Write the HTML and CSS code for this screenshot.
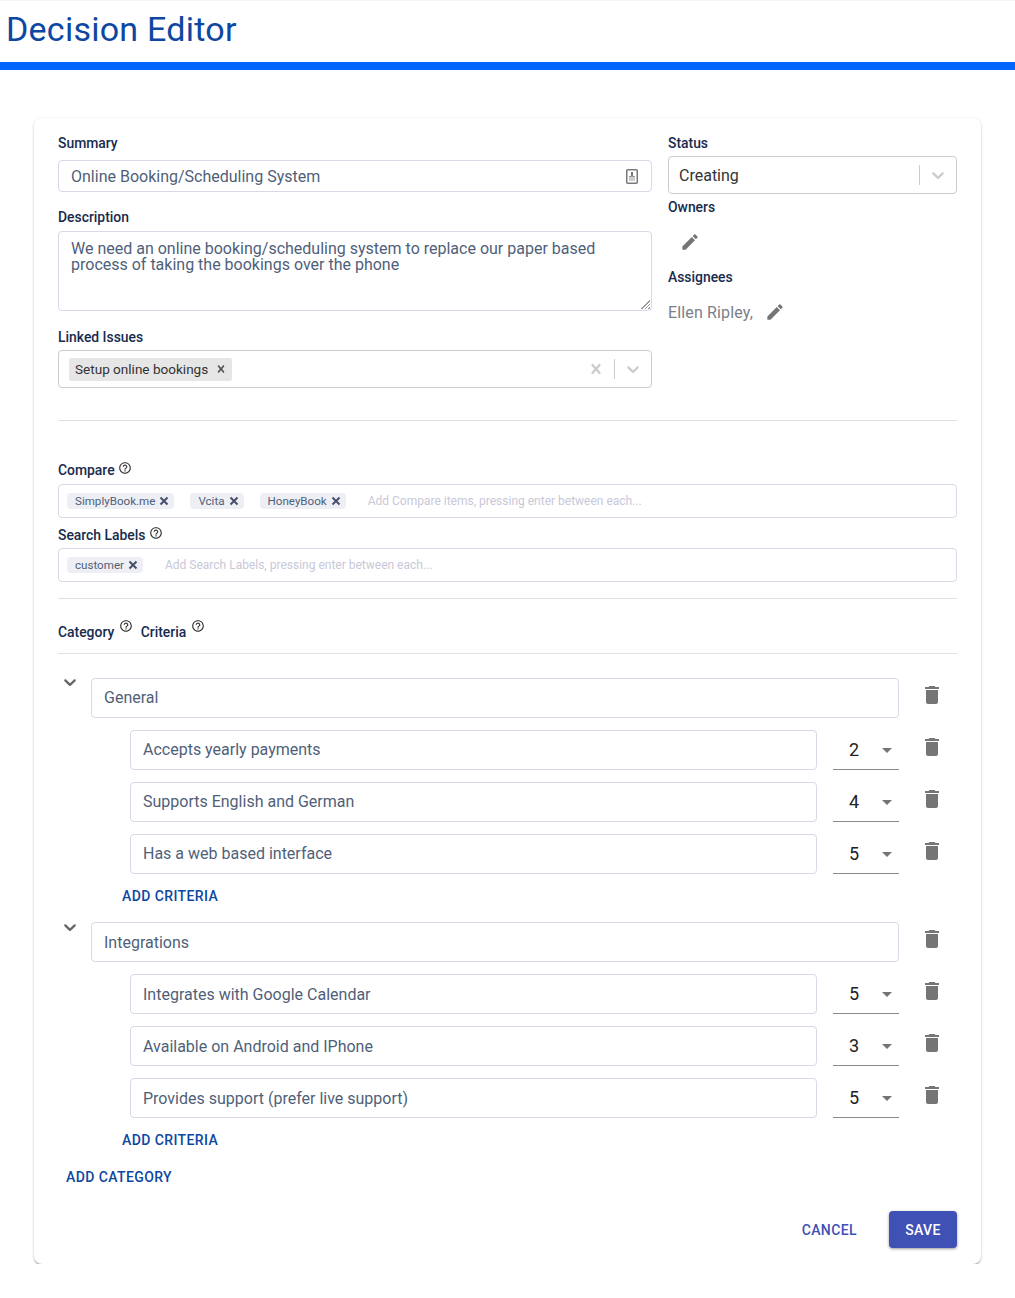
FILE: index.html
```html
<!DOCTYPE html>
<html lang="en">
<head>
  <meta charset="UTF-8" />
  <meta name="viewport" content="width=device-width, initial-scale=1.0" />
  <title>Decision Editor</title>
  <link rel="stylesheet" href="styles.css">
</head>
<body>
  <svg class="sprite" aria-hidden="true">
    <symbol id="i-pencil" viewBox="0 0 24 24"><path d="M3 17.25V21h3.75L17.81 9.94l-3.75-3.75L3 17.25zM20.71 7.04c.39-.39.39-1.02 0-1.41l-2.34-2.34c-.39-.39-1.02-.39-1.41 0l-1.83 1.83 3.75 3.75 1.83-1.83z"/></symbol>
    <symbol id="i-trash" viewBox="0 0 24 24"><path d="M6 19c0 1.1.9 2 2 2h8c1.1 0 2-.9 2-2V7H6v12zM19 4h-3.5l-1-1h-5l-1 1H5v2h14V4z"/></symbol>
    <symbol id="i-help" viewBox="0 0 24 24"><path d="M11 18h2v-2h-2v2zm1-16C6.48 2 2 6.48 2 12s4.48 10 10 10 10-4.48 10-10S17.52 2 12 2zm0 18c-4.41 0-8-3.59-8-8s3.59-8 8-8 8 3.59 8 8-3.59 8-8 8zm0-14c-2.21 0-4 1.79-4 4h2c0-1.1.9-2 2-2s2 .9 2 2c0 2-3 1.75-3 5h2c0-2.25 3-2.5 3-5 0-2.21-1.79-4-4-4z"/></symbol>
    <symbol id="i-chevron" viewBox="0 0 20 20"><path d="M4.516 7.548c0.436-0.446 1.043-0.481 1.576 0l3.908 3.747 3.908-3.747c0.533-0.481 1.141-0.446 1.574 0 0.436 0.445 0.408 1.197 0 1.615-0.406 0.418-4.695 4.502-4.695 4.502-0.217 0.223-0.502 0.335-0.787 0.335s-0.57-0.112-0.789-0.335c0 0-4.287-4.084-4.695-4.502s-0.436-1.17 0-1.615z"/></symbol>
    <symbol id="i-cross" viewBox="0 0 20 20"><path d="M14.348 14.849c-0.469 0.469-1.229 0.469-1.697 0l-2.651-3.030-2.651 3.029c-0.469 0.469-1.229 0.469-1.697 0-0.469-0.469-0.469-1.229 0-1.697l2.758-3.15-2.759-3.152c-0.469-0.469-0.469-1.228 0-1.697s1.228-0.469 1.697 0l2.652 3.031 2.651-3.031c0.469-0.469 1.228-0.469 1.697 0s0.469 1.229 0 1.697l-2.758 3.152 2.758 3.15c0.469 0.469 0.469 1.229 0 1.698z"/></symbol>
    <symbol id="i-close" viewBox="0 0 12 12"><path d="M2.500 2.500l7 7M9.500 2.500l-7 7" fill="none" stroke="currentColor" stroke-width="2"/></symbol>
    <symbol id="i-caret" viewBox="0 0 24 24"><path d="M7 10l5 5 5-5z"/></symbol>
    <symbol id="i-pass" viewBox="0 0 12 15">
      <rect x="0.750" y="0.750" width="10.500" height="13.500" rx="1" fill="#fff" stroke="#7a7a7a" stroke-width="1.500"/>
      <rect x="5" y="3" width="2" height="4" fill="#777"/>
      <rect x="3" y="7" width="6" height="1.500" fill="#999"/>
      <rect x="3" y="9" width="6" height="3" fill="#ccc"/>
    </symbol>
  </svg>

  <header class="page-header">
    <h1>Decision Editor</h1>
  </header>

  <main class="card">
    <section class="top">
      <div class="top-left">
        <div class="label">Summary</div>
        <div class="field summary">
          <span>Online Booking/Scheduling System</span>
          <svg class="pass-icon"><use href="#i-pass"/></svg>
        </div>

        <div class="label description-label">Description</div>
        <textarea class="description">We need an online booking/scheduling system to replace our paper based process of taking the bookings over the phone</textarea>

        <div class="label linked-label">Linked Issues</div>
        <div class="select">
          <div class="select-value">
            <span class="issue-tag">Setup online bookings <svg><use href="#i-cross"/></svg></span>
          </div>
          <svg class="select-clear"><use href="#i-cross"/></svg>
          <span class="select-sep"></span>
          <svg class="select-arrow"><use href="#i-chevron"/></svg>
        </div>
      </div>

      <div class="top-right">
        <div class="label status-label">Status</div>
        <div class="select">
          <div class="select-value status-value">Creating</div>
          <span class="select-sep"></span>
          <svg class="select-arrow"><use href="#i-chevron"/></svg>
        </div>
        <div class="label owners-label">Owners</div>
        <div class="people owners"><svg class="pencil"><use href="#i-pencil"/></svg></div>
        <div class="label">Assignees</div>
        <div class="people assignees">Ellen Ripley, <svg class="pencil"><use href="#i-pencil"/></svg></div>
      </div>
    </section>

    <hr class="rule first-rule">

    <div class="label compare-label">Compare <svg class="help"><use href="#i-help"/></svg></div>
    <div class="tags-box">
      <span class="tag">SimplyBook.me <svg><use href="#i-close"/></svg></span>
      <span class="tag">Vcita <svg><use href="#i-close"/></svg></span>
      <span class="tag">HoneyBook <svg><use href="#i-close"/></svg></span>
      <span class="tags-hint">Add Compare items, pressing enter between each...</span>
    </div>

    <div class="label search-label">Search Labels <svg class="help"><use href="#i-help"/></svg></div>
    <div class="tags-box">
      <span class="tag">customer <svg><use href="#i-close"/></svg></span>
      <span class="tags-hint">Add Search Labels, pressing enter between each...</span>
    </div>

    <hr class="rule second-rule">

    <div class="heading-row">
      <div class="label">Category <svg class="help raised"><use href="#i-help"/></svg></div>
      <div class="label">Criteria <svg class="help raised"><use href="#i-help"/></svg></div>
    </div>

    <hr class="rule third-rule">

    <div class="category">
      <div class="row">
        <svg class="toggle"><use href="#i-chevron"/></svg>
        <div class="field tall">General</div>
        <svg class="trash"><use href="#i-trash"/></svg>
      </div>
      <div class="row criterion">
        <div class="field tall">Accepts yearly payments</div>
        <div class="weight">2 <svg><use href="#i-caret"/></svg></div>
        <svg class="trash"><use href="#i-trash"/></svg>
      </div>
      <div class="row criterion">
        <div class="field tall">Supports English and German</div>
        <div class="weight">4 <svg><use href="#i-caret"/></svg></div>
        <svg class="trash"><use href="#i-trash"/></svg>
      </div>
      <div class="row criterion">
        <div class="field tall">Has a web based interface</div>
        <div class="weight">5 <svg><use href="#i-caret"/></svg></div>
        <svg class="trash"><use href="#i-trash"/></svg>
      </div>
      <button class="text-btn add-criteria">Add Criteria</button>
    </div>

    <div class="category">
      <div class="row">
        <svg class="toggle"><use href="#i-chevron"/></svg>
        <div class="field tall">Integrations</div>
        <svg class="trash"><use href="#i-trash"/></svg>
      </div>
      <div class="row criterion">
        <div class="field tall">Integrates with Google Calendar</div>
        <div class="weight">5 <svg><use href="#i-caret"/></svg></div>
        <svg class="trash"><use href="#i-trash"/></svg>
      </div>
      <div class="row criterion">
        <div class="field tall">Available on Android and IPhone</div>
        <div class="weight">3 <svg><use href="#i-caret"/></svg></div>
        <svg class="trash"><use href="#i-trash"/></svg>
      </div>
      <div class="row criterion">
        <div class="field tall">Provides support (prefer live support)</div>
        <div class="weight">5 <svg><use href="#i-caret"/></svg></div>
        <svg class="trash"><use href="#i-trash"/></svg>
      </div>
      <button class="text-btn add-criteria">Add Criteria</button>
    </div>

    <button class="text-btn add-category">Add Category</button>

    <div class="actions">
      <button class="text-btn cancel">Cancel</button>
      <button class="save">Save</button>
    </div>
  </main>
</body>
</html>
```

FILE: styles.css
```css
html, body {
  margin: 0;
  background: #fff;
  font-family: Roboto, sans-serif;
}
.sprite {
  display: none;
}
.page-header {
  height: 61px;
  border-top: 1px solid #f5f5f5;
  border-bottom: 8px solid #0066ff;
}
h1 {
  margin: 0;
  padding-left: 6px;
  font-size: 34px;
  font-weight: 400;
  letter-spacing: 0.25px;
  line-height: 56px;
  color: #0d47a1;
}
.card {
  box-sizing: border-box;
  width: 947px;
  height: 1146px;
  margin: 48px 0 0 34px;
  padding: 15px 24px 16px;
  border-radius: 8px;
  background: #fff;
  box-shadow: 0 2px 2px -1px rgba(0, 0, 0, 0.35), 0 1px 3px 0 rgba(0, 0, 0, 0.2);
}
.top {
  display: flex;
  gap: 16px;
}
.top-left {
  width: 594px;
}
.top-right {
  flex: 1;
}
.label {
  font-size: 13.9px;
  font-weight: 500;
  line-height: 20px;
  color: #172b4d;
}
.description-label {
  margin-top: 15px;
  margin-bottom: 4px;
}
.linked-label {
  margin-top: 16px;
  margin-bottom: 3px;
}
.status-label {
  margin-bottom: 3px;
}
.owners-label {
  margin-top: 3px;
}
.field {
  box-sizing: border-box;
  display: flex;
  align-items: center;
  border: 1px solid #d8d8e6;
  border-radius: 4px;
  padding: 0 12px;
  font-size: 16px;
  color: #505f79;
}
.summary {
  justify-content: space-between;
  height: 32px;
  margin-top: 7px;
}
.pass-icon {
  width: 12px;
  height: 15px;
  margin-right: 1px;
}
.description {
  display: block;
  box-sizing: border-box;
  width: 100%;
  height: 80px;
  margin: 0;
  padding: 9px 12px;
  border: 1px solid #d8d8e6;
  border-radius: 4px;
  outline: none;
  resize: none;
  background:
    linear-gradient(135deg, #fff 50%, transparent 50%) right 1px bottom 1px / 11px 11px no-repeat,
    repeating-linear-gradient(135deg, transparent 0 1.5px, #999 1.5px 2.5px) right 1px bottom 1px / 11px 11px no-repeat;
  font-family: inherit;
  font-size: 16px;
  line-height: 16px;
  color: #505f79;
}
.select {
  box-sizing: border-box;
  display: flex;
  align-items: center;
  height: 38px;
  padding-right: 8px;
  border: 1px solid #ccc;
  border-radius: 4px;
}
.select-value {
  flex: 1;
  display: flex;
  padding-left: 10px;
}
.status-value {
  font-size: 16px;
  color: #333;
}
.issue-tag {
  display: flex;
  align-items: center;
  height: 23px;
  padding: 0 4px 0 6px;
  border-radius: 2px;
  background: #e6e6e6;
  font-size: 13.55px;
  color: #333;
}
.issue-tag svg {
  width: 14px;
  height: 14px;
  margin-left: 6px;
  fill: #555;
}
.select-clear {
  width: 20px;
  height: 20px;
  margin-right: 8px;
  fill: #ccc;
}
.select-sep {
  width: 1px;
  height: 20px;
  background: #ccc;
}
.select-arrow {
  width: 20px;
  height: 20px;
  margin-left: 8px;
  fill: #ccc;
}
.people {
  display: flex;
  align-items: center;
  height: 50px;
  font-size: 16px;
  letter-spacing: 0.15px;
  color: #7a7f88;
}
.owners {
  padding-left: 10px;
}
.assignees {
  gap: 10px;
}
.pencil {
  width: 24px;
  height: 24px;
  fill: #757575;
  transform: scale(0.85);
}
.rule {
  margin: 0;
  border: none;
  border-top: 1px solid #e0e0e0;
}
.first-rule {
  margin-top: 32px;
}
.compare-label {
  margin-top: 39px;
  margin-bottom: 4px;
}
.search-label {
  margin-top: 7px;
  margin-bottom: 3px;
}
.help {
  width: 14px;
  height: 14px;
  fill: #333;
}
.help.raised {
  margin-left: 1px;
  vertical-align: 4px;
}
.tags-box {
  box-sizing: border-box;
  display: flex;
  align-items: center;
  gap: 16px;
  height: 34px;
  padding: 0 8px;
  border: 1px solid #d8d8e6;
  border-radius: 4px;
}
.tag {
  display: flex;
  align-items: center;
  height: 16px;
  padding: 0 4px 0 8px;
  border-radius: 4px;
  background: #eeeef5;
  font-size: 11.6px;
  color: #505f79;
}
.tag svg {
  width: 12px;
  height: 12px;
  margin-left: 3px;
  color: #46506a;
}
.tags-hint {
  margin-left: 6px;
  font-size: 12px;
  color: #c8c8d8;
}
.second-rule {
  margin-top: 16px;
}
.heading-row {
  display: flex;
  gap: 8px;
  margin-top: 20px;
}
.third-rule {
  margin-top: 11px;
  margin-bottom: 24px;
}
.row {
  display: flex;
  align-items: center;
  height: 40px;
  margin-bottom: 12px;
}
.row .field {
  flex: 1;
}
.tall {
  height: 40px;
  padding-bottom: 2px;
}
.category + .category .tall {
  padding-bottom: 0;
}
.toggle {
  width: 20px;
  height: 20px;
  margin: -32px 11px 0 2px;
  fill: #666;
}
.category + .category .toggle {
  margin-top: -30px;
}
.trash {
  width: 24px;
  height: 24px;
  margin: -6px 13px 0 21px;
  fill: #757575;
}
.criterion {
  margin-left: 72px;
}
.weight {
  box-sizing: border-box;
  display: flex;
  align-items: center;
  justify-content: space-between;
  width: 66px;
  height: 40px;
  margin-left: 16px;
  margin-right: -21px;
  padding-left: 16px;
  border-bottom: 1px solid #8a8a8a;
  font-size: 18px;
  color: #222;
}
.weight svg {
  width: 24px;
  height: 24px;
  fill: #757575;
}
.weight + .trash {
  margin-left: 42px;
}
.text-btn {
  padding: 0;
  border: none;
  background: none;
  font-family: inherit;
  font-size: 14px;
  font-weight: 500;
  letter-spacing: 0.4px;
  text-transform: uppercase;
  color: #0d47a1;
}
.add-criteria {
  display: block;
  height: 20px;
  margin: 0 0 16px 64px;
}
.add-category {
  display: block;
  height: 20px;
  margin: 17px 0 0 8px;
}
.actions {
  display: flex;
  justify-content: flex-end;
  align-items: center;
  gap: 32px;
  margin-top: 24px;
}
.cancel {
  color: #3f51b5;
}
.save {
  width: 68px;
  height: 37px;
  border: none;
  border-radius: 4px;
  background: #3f51b5;
  box-shadow: 0 1px 3px rgba(0, 0, 0, 0.4);
  font-family: inherit;
  font-size: 14px;
  font-weight: 500;
  letter-spacing: 0.4px;
  text-transform: uppercase;
  color: #fff;
}
```
